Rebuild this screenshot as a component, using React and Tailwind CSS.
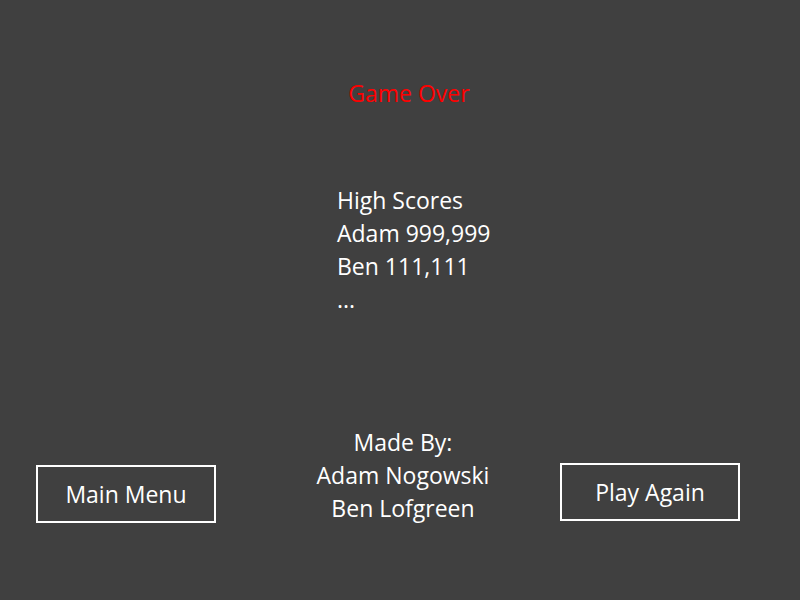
import React from 'react';

const font = { fontFamily: '"Open Sans", "Liberation Sans", sans-serif' };

function MenuButton({ label, className }) {
  return (
    <button
      className={`w-[180px] h-[58px] border-2 border-white text-white text-[23px] bg-transparent ${className}`}
      style={font}
    >
      {label}
    </button>
  );
}

export default function App() {
  const scores = ['High Scores', 'Adam 999,999', 'Ben 111,111', '...'];

  return (
    <div className="w-full h-[600px] bg-[#404040] flex flex-col text-white" style={font}>
      <div className="pt-[77px] pl-[18px] text-center text-[23px] leading-[32px] text-[#ff0000]">
        Game Over
      </div>

      <div className="mt-[75px] pl-[337px] text-[23px] leading-[33px]">
        {scores.map((s) => (
          <div key={s}>{s}</div>
        ))}
      </div>

      <div className="mt-[110px] flex items-start">
        <MenuButton label="Main Menu" className="ml-[36px] mt-[39px]" />
        <div className="w-[344px] pl-[30px] text-center text-[23px] leading-[33px]">
          <div>Made By:</div>
          <div>Adam Nogowski</div>
          <div>Ben Lofgreen</div>
        </div>
        <MenuButton label="Play Again" className="mt-[37px]" />
      </div>
    </div>
  );
}
